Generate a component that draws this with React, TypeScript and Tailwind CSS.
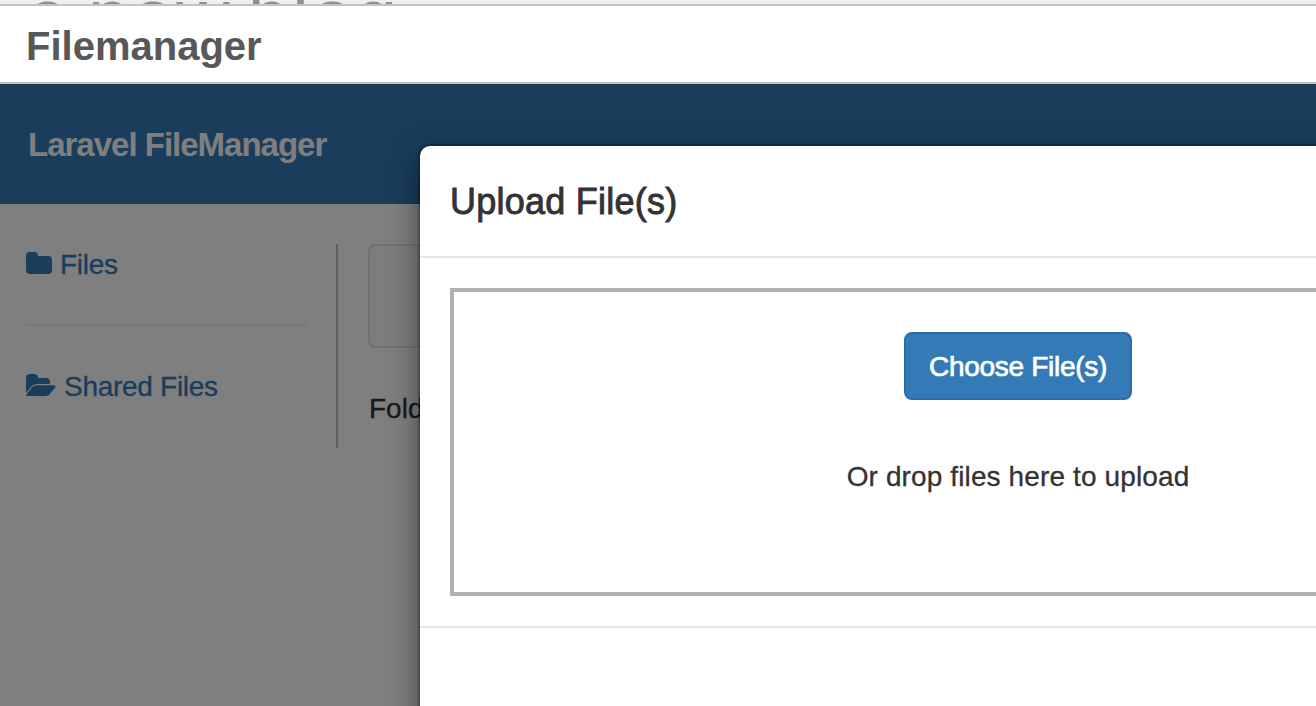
function FolderIcon() {
  return (
    <svg viewBox="64 0 1664 1792" className="h-[28px] w-[26px] shrink-0" fill="currentColor">
      <path d="M1728 608v704q0 92-66 158t-158 66h-1216q-92 0-158-66t-66-158v-960q0-92 66-158t158-66h320q92 0 158 66t66 158v32h672q92 0 158 66t66 158z" />
    </svg>
  );
}

function FolderOpenIcon() {
  return (
    <svg viewBox="0 0 1920 1792" className="h-[28px] w-[30px] shrink-0" fill="currentColor">
      <path d="M1879 952q0 31-31 66l-352 414q-43 51-110 78t-130 26h-1140q-34 0-75-13t-26-43q0-31 31-66l352-440q43-51 120.5-86.5t143.5-35.5h1130q34 0 60.5 13t26.5 43z" />
      <path d="M1536 608v160h-832q-94 0-197 47.5t-164 119.5l-337 396-5 6q0-4-.5-12.5t-.5-12.5v-960q0-92 66-158t158-66h320q92 0 158 66t66 158v32h544q92 0 158 66t66 158z" />
    </svg>
  );
}

function UploadDialog() {
  return (
    <section className="absolute top-[62px] left-[420px] h-[700px] w-[1196px] rounded-[10px] bg-white text-[#333] shadow-[0_0_0_2px_rgba(0,0,0,0.22),0_10px_30px_rgba(0,0,0,0.5)]">
      <header className="flex h-[112px] items-center border-b-2 border-[#e5e5e5] px-[30px] pt-[2px]">
        <h2 className="text-[36px] leading-[40px] font-normal tracking-[0.25px] whitespace-nowrap [-webkit-text-stroke:0.9px_#333]">Upload File(s)</h2>
      </header>
      <div className="border-b-2 border-[#e5e5e5] p-[30px]">
        <div className="flex h-[308px] flex-col items-center border-4 border-[#b2b2b2] pt-[40px]">
          <button className="flex h-[68px] w-[228px] items-center justify-center rounded-[8px] border-2 border-[#2e6da4] bg-[#337ab7] pt-[2px] text-[28px] tracking-[-0.3px] whitespace-nowrap text-white [-webkit-text-stroke:0.7px_#fff]">
            Choose File(s)
          </button>
          <p className="mt-[57px] text-[28px] leading-[40px] tracking-[0.12px] whitespace-nowrap [-webkit-text-stroke:0.3px_#333]">Or drop files here to upload</p>
        </div>
      </div>
    </section>
  );
}

export default function App() {
  return (
    <div className="flex h-[706px] w-[1316px] flex-col overflow-hidden bg-white font-['Liberation_Sans',Arial,sans-serif]">
      <div className="h-[4px] shrink-0 overflow-hidden bg-[#efeff0]">
        <div className="-mt-[21px] flex pl-[27px] text-[74px] leading-[74px] tracking-[3px] whitespace-nowrap text-[#8f9092]">
          <span className="w-[61px]">e</span>
          <span className="w-[160px]">now</span>
          <span>blog</span>
        </div>
      </div>
      <header className="flex h-[80px] shrink-0 items-center border-y-2 border-[#c3c3c3] pt-[4px] pl-[26px]">
        <h1 className="text-[40px] leading-[44px] font-bold tracking-[0px] text-[#585858]">Filemanager</h1>
      </header>
      <main className="relative flex-1 overflow-hidden">
        <div className="flex h-[120px] items-center bg-[#337ab7] pt-[2px] pl-[28px]">
          <span className="text-[33px] leading-[40px] font-bold tracking-[-1px] text-white">Laravel FileManager</span>
        </div>
        <div className="flex h-[502px] pt-[40px] text-[28px] leading-[40px] text-[#333] [-webkit-text-stroke:0.3px_currentColor]">
          <nav className="ml-[26px] h-[204px] w-[312px] border-r-2 border-[#c0c0c0] pr-[29px] tracking-[-0.28px] text-[#337ab7]">
            <a className="flex h-[40px] items-center gap-[8px]"><FolderIcon /><span className="pt-[2px]">Files</span></a>
            <hr className="my-[40px] border-t-2 border-[#eee]" />
            <a className="flex h-[40px] items-center gap-[8px]"><FolderOpenIcon /><span className="pt-[2px]">Shared Files</span></a>
          </nav>
          <div className="ml-[30px] flex-1">
            <div className="h-[104px] rounded-[8px] border-2 border-[#e3e3e3] bg-[#fafafa]" />
            <p className="mt-[41px] pl-[1px]">Folder</p>
          </div>
        </div>
        <div className="absolute inset-0 bg-black/50" />
        <UploadDialog />
      </main>
    </div>
  );
}
